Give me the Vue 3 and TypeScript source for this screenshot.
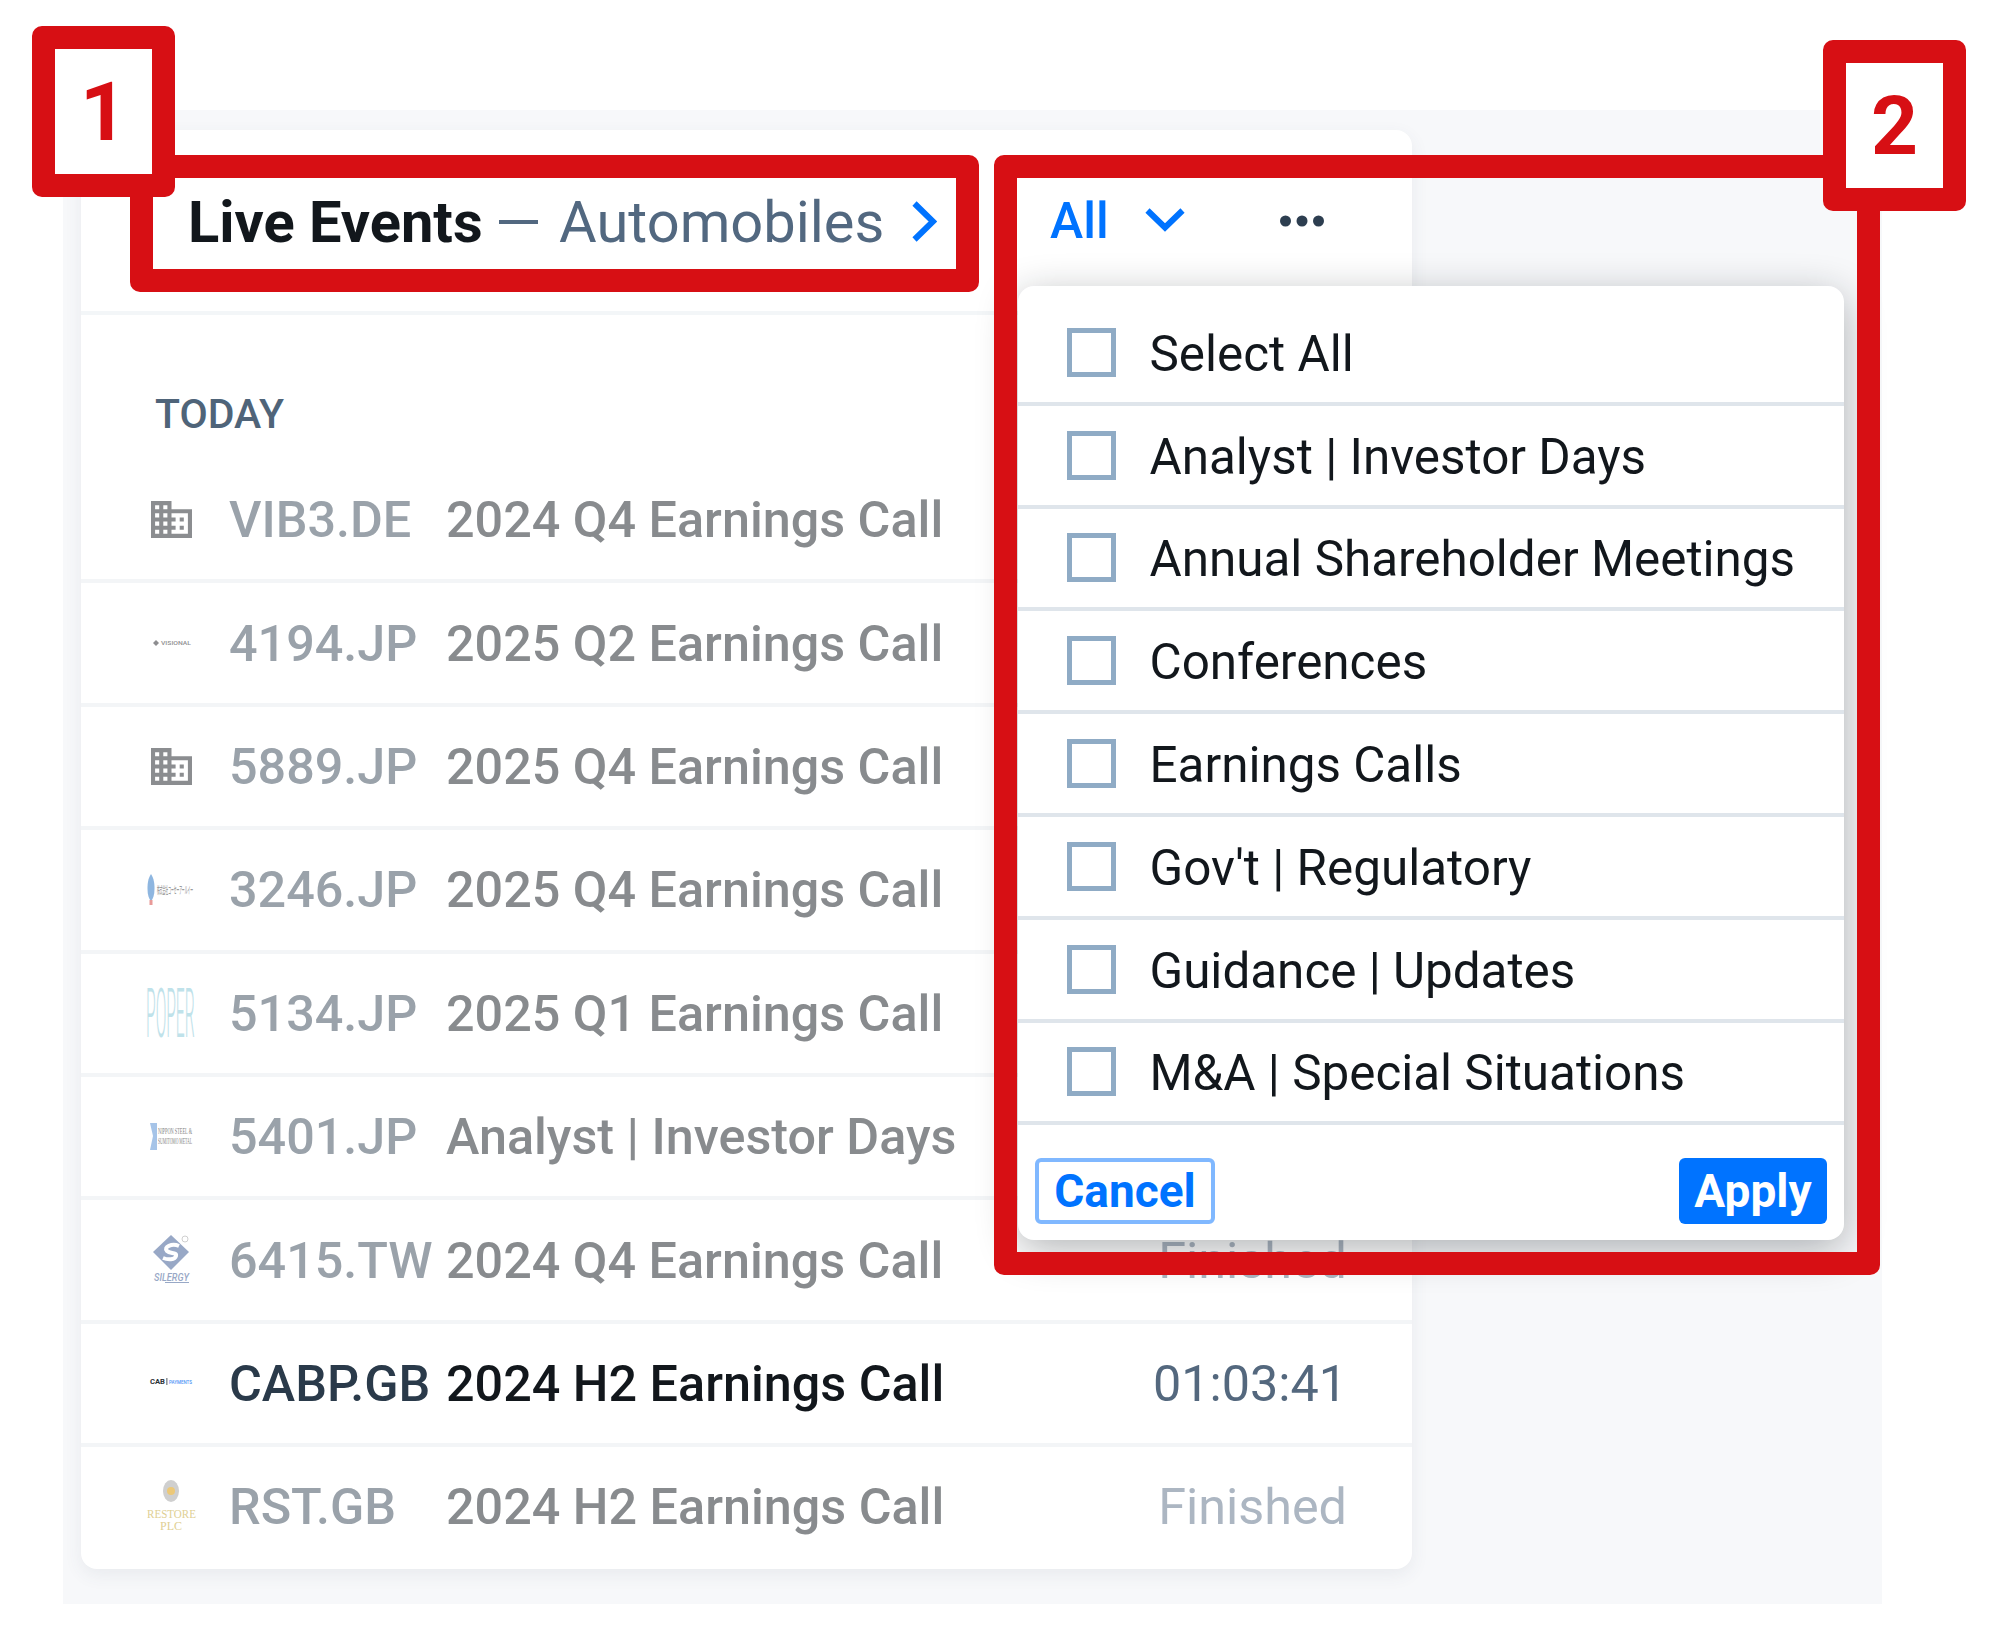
<script setup lang="ts">
interface EventRow {
  logo: string;
  ticker: string;
  title: string;
  time: string;
  live?: boolean;
}

const rows: EventRow[] = [
  { logo: "building", ticker: "VIB3.DE", title: "2024 Q4 Earnings Call", time: "Finished" },
  { logo: "visional", ticker: "4194.JP", title: "2025 Q2 Earnings Call", time: "Finished" },
  { logo: "building", ticker: "5889.JP", title: "2025 Q4 Earnings Call", time: "Finished" },
  { logo: "kose", ticker: "3246.JP", title: "2025 Q4 Earnings Call", time: "Finished" },
  { logo: "poper", ticker: "5134.JP", title: "2025 Q1 Earnings Call", time: "Finished" },
  { logo: "nippon", ticker: "5401.JP", title: "Analyst | Investor Days", time: "Finished" },
  { logo: "silergy", ticker: "6415.TW", title: "2024 Q4 Earnings Call", time: "Finished" },
  { logo: "cab", ticker: "CABP.GB", title: "2024 H2 Earnings Call", time: "01:03:41", live: true },
  { logo: "restore", ticker: "RST.GB", title: "2024 H2 Earnings Call", time: "Finished" },
];

const filters: string[] = [
  "Select All",
  "Analyst | Investor Days",
  "Annual Shareholder Meetings",
  "Conferences",
  "Earnings Calls",
  "Gov't | Regulatory",
  "Guidance | Updates",
  "M&A | Special Situations",
];
</script>

<template>
  <div class="page">
    <div class="stage">
      <section class="card">
        <header class="card-head">
          <div class="head-title">
            <strong>Live Events</strong>
            <span class="dash"></span>
            <span class="sector">Automobiles</span>
            <svg class="head-chevron" viewBox="0 0 25 41" width="25" height="41">
              <path d="M2.5 2.5 L21 20.5 L2.5 38.5" fill="none" stroke="#0073ff" stroke-width="6" />
            </svg>
          </div>
          <div class="head-tools">
            <span class="all">All</span>
            <svg class="all-chevron" viewBox="0 0 40 25" width="40" height="25">
              <path d="M2.5 2.5 L20 19.5 L37.5 2.5" fill="none" stroke="#0073ff" stroke-width="6" />
            </svg>
            <svg class="dots" viewBox="0 0 44 12" width="44" height="12">
              <circle cx="5.5" cy="6" r="5.5" fill="#2d3e50" />
              <circle cx="22" cy="6" r="5.5" fill="#2d3e50" />
              <circle cx="38.5" cy="6" r="5.5" fill="#2d3e50" />
            </svg>
          </div>
        </header>

        <div class="day">TODAY</div>

        <ul class="events">
          <li v-for="row in rows" :key="row.ticker" class="event" :class="{ live: row.live }">
            <div class="logo">
              <svg v-if="row.logo === 'building'" class="logo-building" viewBox="2 3 20 18" width="41" height="37">
                <path fill="#8b8d90" d="M12 7V3H2v18h20V7H12zM6 19H4v-2h2v2zm0-4H4v-2h2v2zm0-4H4V9h2v2zm0-4H4V5h2v2zm4 12H8v-2h2v2zm0-4H8v-2h2v2zm0-4H8V9h2v2zm0-4H8V5h2v2zm10 12h-8v-2h2v-2h-2v-2h2v-2h-2V9h8v10zm-2-8h-2v2h2v-2zm0 4h-2v2h2v-2z" />
              </svg>
              <svg v-else-if="row.logo === 'visional'" viewBox="0 0 50 50" width="50" height="50">
                <path d="M11 22 L14 25 L11 28 L8 25 Z" fill="#8d8d90" />
                <text x="16" y="27" font-size="6" textLength="30" lengthAdjust="spacingAndGlyphs" fill="#8f8f92" font-family="Roboto, sans-serif">VISIONAL</text>
              </svg>
              <svg v-else-if="row.logo === 'kose'" viewBox="0 0 50 50" width="50" height="50">
                <path d="M6 9 C9 14 9.5 18 9.5 24 C9.5 30 8 34 6 36 C4 34 2.5 30 2.5 24 C2.5 18 3 14 6 9Z" fill="#8eb6e0" />
                <rect x="4.5" y="35" width="3" height="5" fill="#e89a98" />
                <text x="12" y="29" font-size="10" textLength="36" lengthAdjust="spacingAndGlyphs" fill="#9c9c9c" font-family="'Noto Sans CJK JP', sans-serif">株式会社コーセーアールイー</text>
              </svg>
              <svg v-else-if="row.logo === 'poper'" viewBox="0 0 50 50" width="50" height="50">
                <text transform="translate(1 49) scale(0.23 1)" font-size="68" fill="#bfe2ea" font-weight="300" font-family="Roboto, sans-serif">POPER</text>
              </svg>
              <svg v-else-if="row.logo === 'nippon'" viewBox="0 0 50 50" width="50" height="50">
                <path d="M5 11 L12 11 L12 38 L5 38 L8 24Z" fill="#a6c4e8" />
                <text x="13" y="22" font-size="8" textLength="34" lengthAdjust="spacingAndGlyphs" fill="#7e7e7e" font-family="'Liberation Serif', serif">NIPPON STEEL &amp;</text>
                <text x="13" y="32" font-size="8" textLength="34" lengthAdjust="spacingAndGlyphs" fill="#7e7e7e" font-family="'Liberation Serif', serif">SUMITOMO METAL</text>
              </svg>
              <svg v-else-if="row.logo === 'silergy'" viewBox="0 0 50 50" width="50" height="50">
                <path d="M26 0 L44 17 L26 35 L8 17 Z" fill="#98a8c6" />
                <path d="M34 11 C27 8 18 12 22 16 C25 19 32 17 31 21 C30 25 23 25 18 23" fill="none" stroke="#fff" stroke-width="4" />
                <circle cx="40" cy="4" r="3" fill="none" stroke="#c4c4c4" stroke-width="0.8" />
                <text x="9" y="46" font-size="11" font-style="italic" textLength="35" lengthAdjust="spacingAndGlyphs" fill="#98a8c6" font-family="Roboto, sans-serif">SILERGY</text>
                <rect x="20" y="47" width="24" height="1" fill="#98a8c6" />
              </svg>
              <svg v-else-if="row.logo === 'cab'" viewBox="0 0 50 50" width="50" height="50">
                <text x="5" y="26" font-size="7" font-weight="700" textLength="15" lengthAdjust="spacingAndGlyphs" fill="#2b3036" font-family="Roboto, sans-serif">CAB</text>
                <rect x="21.5" y="20" width="0.8" height="7" fill="#2b3036" />
                <text x="24" y="26" font-size="6" textLength="23" lengthAdjust="spacingAndGlyphs" fill="#4d93f5" font-family="Roboto, sans-serif">PAYMENTS</text>
              </svg>
              <svg v-else-if="row.logo === 'restore'" viewBox="0 0 50 50" width="50" height="50">
                <ellipse cx="26" cy="9" rx="8" ry="11" fill="#cfcfcf" />
                <circle cx="26" cy="9" r="4" fill="#ecc878" />
                <text x="2" y="36" font-size="13" textLength="49" lengthAdjust="spacingAndGlyphs" fill="#e0cf94" font-family="'Liberation Serif', serif">RESTORE</text>
                <text x="15" y="48" font-size="13" textLength="22" lengthAdjust="spacingAndGlyphs" fill="#e0cf94" font-family="'Liberation Serif', serif">PLC</text>
              </svg>
            </div>
            <span class="ticker">{{ row.ticker }}</span>
            <span class="title">{{ row.title }}</span>
            <span class="time">{{ row.time }}</span>
          </li>
        </ul>

        <div class="menu">
          <ul class="menu-list">
            <li v-for="f in filters" :key="f" class="menu-item">
              <span class="box"></span>
              <span class="menu-label">{{ f }}</span>
            </li>
          </ul>
          <div class="menu-foot">
            <button class="btn cancel" type="button">Cancel</button>
            <button class="btn apply" type="button">Apply</button>
          </div>
        </div>
      </section>

      <div class="mark mark-one"></div>
      <div class="mark mark-two"></div>
      <div class="tag tag-one">1</div>
      <div class="tag tag-two">2</div>
    </div>
  </div>
</template>

<style>
html, body { background: #fff; margin: 0; }
</style>

<style scoped>
.page {
  width: 1994px;
  height: 1634px;
  box-sizing: border-box;
  padding: 110px 0 0 63px;
  font-family: Roboto, "Noto Sans CJK JP", sans-serif;
  overflow: hidden;
}
.stage {
  position: relative;
  width: 1819px;
  height: 1494px;
  box-sizing: border-box;
  padding: 20px 0 0 18px;
  background: #f7f8fa;
}
.card {
  position: relative;
  width: 1331px;
  height: 1439px;
  background: #fff;
  border-radius: 16px;
  box-shadow: 0 6px 18px rgba(60, 80, 100, 0.08);
}
.card-head {
  height: 185px;
  box-sizing: border-box;
  border-bottom: 4px solid #f3f6f8;
  display: flex;
  align-items: center;
  padding: 3px 0 0 107px;
  position: relative;
}
.head-title {
  display: flex;
  align-items: center;
  font-size: 57.8px;
  line-height: 1;
}
.head-title strong { font-weight: 700; color: #12171c; padding-top: 2px; }
.dash {
  width: 39px;
  height: 4px;
  margin: 0 21px 0 16.5px;
  background: #526880;
}
.sector { color: #526880; font-weight: 400; padding-top: 2px; }
.head-chevron { margin-left: 28px; }
.head-tools {
  position: absolute;
  left: 969px;
  top: 0;
  height: 100%;
  display: flex;
  align-items: center;
}
.all { font-size: 50px; font-weight: 500; color: #0073ff; line-height: 1; }
.all-chevron { margin-left: 36px; }
.dots { margin-left: 95px; }

.day {
  padding: 82px 0 0 74px;
  height: 63px;
  font-size: 41px;
  font-weight: 500;
  line-height: 34px;
  color: #4f6479;
}
.events {
  list-style: none;
  margin: 0;
  padding: 0;
}
.event {
  height: 123.4px;
  box-sizing: border-box;
  border-bottom: 4px solid #f3f5f7;
  display: flex;
  align-items: center;
  padding: 0 65px 0 64px;
  font-size: 50.3px;
  font-weight: 500;
  white-space: nowrap;
}
.event:last-child { border-bottom-color: transparent; }
.logo {
  width: 50px;
  height: 50px;
  flex: none;
  display: flex;
  align-items: center;
  justify-content: center;
}
.logo svg { overflow: visible; }
.logo .logo-building { margin-left: 3px; }
.ticker { width: 217px; margin-left: 34px; flex: none; color: #9aa2aa; }
.title { color: #888b8e; }
.time { margin-left: auto; font-weight: 400; color: #acb6c2; }
.live .ticker { color: #2a3a4a; }
.live .title { color: #12171c; }
.live .time { color: #54687e; }

.menu {
  position: absolute;
  left: 936.5px;
  top: 156px;
  width: 826px;
  background: #fff;
  border-radius: 16px;
  box-shadow: 0 10px 40px rgba(20, 25, 30, 0.32);
  z-index: 2;
}
.menu-list {
  list-style: none;
  margin: 0;
  padding: 17px 0 0;
}
.menu-item {
  height: 102.8px;
  box-sizing: border-box;
  border-bottom: 4px solid #dfe5eb;
  display: flex;
  align-items: center;
  padding-left: 49.5px;
  font-size: 49.4px;
  color: #12171c;
  white-space: nowrap;
}
.menu-label { padding-top: 3px; }
.box {
  width: 49px;
  height: 49px;
  box-sizing: border-box;
  border: 5px solid #8fabc5;
  margin-right: 33.5px;
  flex: none;
}
.menu-foot {
  display: flex;
  justify-content: space-between;
  padding: 33px 16.5px 16px 17.5px;
}
.btn {
  height: 66px;
  box-sizing: border-box;
  border-radius: 6px;
  font-family: inherit;
  font-size: 46px;
  font-weight: 700;
  padding: 0;
  line-height: 1;
}
.cancel { width: 180px; background: #fff; color: #0073ff; border: 4px solid #80b8ff; }
.apply { width: 148px; background: #0073ff; color: #fff; border: 0; }

.mark {
  position: absolute;
  box-sizing: border-box;
  border: 23px solid #d70f14;
  border-radius: 10px;
  z-index: 3;
}
.mark-one { left: 67px; top: 45px; width: 849px; height: 137px; }
.mark-two { left: 931px; top: 45px; width: 886px; height: 1120px; }
.tag {
  position: absolute;
  box-sizing: border-box;
  width: 143px;
  height: 171px;
  border: 23px solid #d70f14;
  border-radius: 10px;
  background: #fff;
  color: #d70f14;
  display: flex;
  align-items: center;
  justify-content: center;
  font-size: 82px;
  font-weight: 700;
  z-index: 4;
}
.tag-one { left: -31px; top: -84px; }
.tag-two { left: 1760px; top: -70px; }
</style>
